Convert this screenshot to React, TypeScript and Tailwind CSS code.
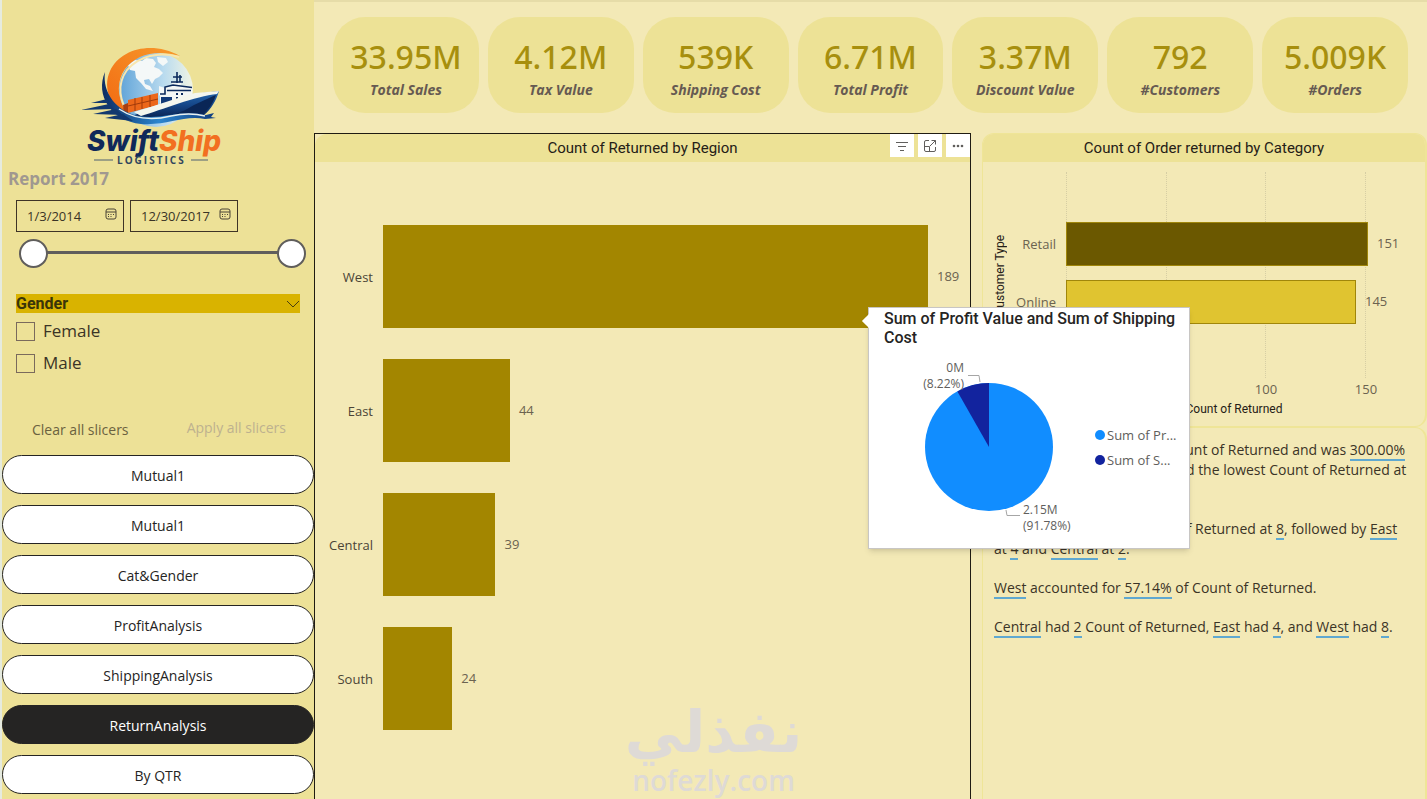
import React, { useState } from 'react'
import clsx from 'clsx'

interface Kpi {
  value: string
  label: string
}

interface Bar {
  name: string
  count: number
  color?: string
}

const kpis: Kpi[] = [
  { value: '33.95M', label: 'Total Sales' },
  { value: '4.12M', label: 'Tax Value' },
  { value: '539K', label: 'Shipping Cost' },
  { value: '6.71M', label: 'Total Profit' },
  { value: '3.37M', label: 'Discount Value' },
  { value: '792', label: '#Customers' },
  { value: '5.009K', label: '#Orders' },
]

const regions: Bar[] = [
  { name: 'West', count: 189 },
  { name: 'East', count: 44 },
  { name: 'Central', count: 39 },
  { name: 'South', count: 24 },
]

const customerTypes: Bar[] = [
  { name: 'Retail', count: 151, color: '#6b5800' },
  { name: 'Online', count: 145, color: '#e0c430' },
]

const pages = ['Mutual1', 'Mutual1', 'Cat&Gender', 'ProfitAnalysis', 'ShippingAnalysis', 'ReturnAnalysis', 'By QTR']

function Logo() {
  return (
    <svg viewBox="0 0 150 124" className="w-[150px] h-[124px]" role="img" aria-label="SwiftShip Logistics">
      <defs>
        <linearGradient id="globe" x1="0" y1="0" x2="1" y2="0">
          <stop offset="0" stopColor="#5fa3d8" />
          <stop offset="0.6" stopColor="#b9dbef" />
          <stop offset="1" stopColor="#f1f4e4" />
        </linearGradient>
        <linearGradient id="ring" x1="0" y1="1" x2="1" y2="0">
          <stop offset="0" stopColor="#f26a12" />
          <stop offset="1" stopColor="#f79a2c" />
        </linearGradient>
        <linearGradient id="hull" x1="0" y1="0" x2="0" y2="1">
          <stop offset="0" stopColor="#2568ae" />
          <stop offset="0.5" stopColor="#154789" />
          <stop offset="1" stopColor="#0a2352" />
        </linearGradient>
        <linearGradient id="wave" x1="0" y1="0" x2="1" y2="0">
          <stop offset="0" stopColor="#0c2c62" />
          <stop offset="0.5" stopColor="#2c86cf" />
          <stop offset="1" stopColor="#0e3b7c" />
        </linearGradient>
      </defs>
      <circle cx="81" cy="47" r="37" fill="url(#globe)" />
      {/* continents */}
      <path d="M53 22 L60 17 L67 18 L71 15 L78 16 L81 20 L79 24 L84 26 L88 30 L84 34 L80 36 L77 41 L74 36 L69 37 L70 41 L75 43 L78 48 L71 46 L66 40 L61 35 L60 28 L55 27 Z" fill="#f4f8f8" />
      <path d="M82 14 L91 15 L93 19 L88 23 L83 19 Z M84 43 L93 46 L95 52 L89 56 L84 52 Z" fill="#f4f8f8" />
      {/* orange crescent */}
      <path d="M105 13 C78 -2 46 5 35 28 C27 46 36 66 53 71 C43 58 40 40 50 26 C61 11 82 6 105 13 Z" fill="url(#ring)" />
      <path d="M104 14 C84 8 64 13 52 27 C41 42 45 59 54 71" fill="none" stroke="#f8e6ae" strokeWidth="2" />
      {/* containers */}
      <path d="M53 57 L83 50 L83 62 L53 70 Z" fill="#ec671a" />
      <path d="M60 55 V68 M67 54 V66 M75 52 V64 M53 63 L83 56" stroke="#a13b0b" strokeWidth="1" fill="none" />
      <path d="M48 62 L53 60 V71 L49 72 Z" fill="#a83f10" />
      {/* bridge */}
      <path d="M85 60 V51 L89 50 V44 L97 43 V39 H106 V43 L117 44 V54 L111 59 L90 63 Z" fill="#f3f6f5" />
      <path d="M85 51 H90 V44 L98 42 L117 44.500 M96 39 H108 M102 40 V29 M98 34 H107 M105 39 V32 M92 47.500 H116" stroke="#0b2a5d" strokeWidth="1.600" fill="none" />
      <path d="M101 51 h2 M106 51 h2 M101 55 h2 M106 55 h2" stroke="#0b2a5d" strokeWidth="2" />
      <path d="M86 54 H97 V61 L86 63 Z" fill="#123a78" />
      {/* hull */}
      <path d="M56 73 C80 66 102 57 119 51 L144 48 C141 58 136 66 129 72 C106 70 80 79 56 73 Z" fill="url(#hull)" />
      <path d="M59 69 C83 62 104 54 120 50 L144 48 L142 51 C121 53 86 67 66 73 Z" fill="#f4f6ee" />
      <path d="M119 62 C128 58 136 54 141 52 C138 60 134 66 128 71 C122 69 110 70 98 72 C106 69 113 66 119 62 Z" fill="#0a2656" />
      {/* bow wave */}
      <path d="M30 29 C27 50 42 69 64 73 C88 77 104 66 131 72 L139 70 L136 74 L141 75 L130 76 C108 72 92 83 66 81 C36 78 20 52 30 29 Z" fill="url(#wave)" />
      <path d="M44 66 C62 78 80 77 96 73 C110 70 122 71 130 73" stroke="#e9f1ef" strokeWidth="1.500" fill="none" />
      {/* speed lines */}
      <path d="M16 60 L32 56 L34 60 Z M6 67 L34 61 L39 66 Z M18 71 L41 66 L48 72 Z M30 75 L48 71 L58 78 Z" fill="#12386f" />
      <text x="12" y="108" fontFamily="Inter, Open Sans, sans-serif" fontSize="28" fontWeight="800" fontStyle="italic" fill="#10295a">
        Swift<tspan fill="#f26f21">Ship</tspan>
      </text>
      <path d="M19 117 H38 M116 117 H133" stroke="#4f6173" strokeWidth="1" />
      <text x="42" y="121" fontFamily="Open Sans, Noto Sans, sans-serif" fontSize="10" fontWeight="700" className="tracking-[2px]" fill="#33475e">
        LOGISTICS
      </text>
    </svg>
  )
}

function CalendarIcon() {
  return (
    <svg viewBox="0 0 12 12" className="w-3 h-3 shrink-0" fill="none" stroke="#4a4436">
      <rect x="1" y="1" width="10" height="10" rx="2" />
      <path d="M1 4 H11" />
      <path d="M3 6.5 H4 M5.5 6.5 H6.5 M8 6.5 H9 M3 8.5 H4 M5.5 8.5 H6.5" />
    </svg>
  )
}

function DateField({ label, initial }: { label: string; initial: string }) {
  const [value, setValue] = useState(initial)
  return (
    <label className="flex items-center w-[108px] h-8 pl-2.5 pr-1.5 border border-[#3f3426]">
      <input
        type="text"
        aria-label={label}
        value={value}
        onChange={e => setValue(e.target.value)}
        className="min-w-0 flex-1 bg-transparent pt-0.5 text-[13px] text-[#3b3426] outline-none"
      />
      <span className="pb-1"><CalendarIcon /></span>
    </label>
  )
}

const thumb =
  'absolute inset-0 w-full h-7 appearance-none bg-transparent pointer-events-none [&::-webkit-slider-thumb]:appearance-none [&::-webkit-slider-thumb]:pointer-events-auto [&::-webkit-slider-thumb]:w-[29px] [&::-webkit-slider-thumb]:h-[29px] [&::-webkit-slider-thumb]:rounded-full [&::-webkit-slider-thumb]:bg-white [&::-webkit-slider-thumb]:border-2 [&::-webkit-slider-thumb]:border-solid [&::-webkit-slider-thumb]:border-[#605e5c]'

function Sidebar() {
  const [active, setActive] = useState(5)

  return (
    <aside className="w-[314px] shrink-0 flex flex-col bg-[#ede197] border-l-2 border-[#e6ebdf]">
      <div className="flex justify-center pt-[43px] pr-4">
        <Logo />
      </div>
      <h1 className="pl-1.5 text-[17px] leading-6 font-bold text-[#a09890]">Report 2017</h1>

      <div className="flex gap-1.5 pl-3.5 mt-[9px]">
        <DateField label="Start date" initial="1/3/2014" />
        <DateField label="End date" initial="12/30/2017" />
      </div>
      <div className="relative h-7 ml-[17px] mr-2 mt-[7px]">
        <div className="absolute inset-x-3 top-3 h-[3px] bg-[#605e5c]" />
        <input type="range" aria-label="Range start" min={0} max={100} defaultValue={0} className={thumb} />
        <input type="range" aria-label="Range end" min={0} max={100} defaultValue={100} className={thumb} />
      </div>

      <div role="group" aria-label="Gender" className="mt-[27px] ml-3.5 mr-[14px]">
        <button type="button" className="flex w-full items-center justify-between bg-[#d9b300] font-[Roboto,sans-serif] text-base leading-[19px] font-bold text-[#3a3509]">
          Gender
          <svg viewBox="0 0 14 8" className="w-3.5 h-2" fill="none" stroke="#4a4010">
            <path d="M1 1 L7 7 L13 1" />
          </svg>
        </button>
        {['Female', 'Male'].map(name => (
          <label key={name} className="flex h-8 items-center gap-2 pt-1 text-[17px] text-[#3b3426]">
            <input type="checkbox" className="appearance-none w-[19px] h-[19px] border border-[#7a6a5c] checked:bg-[#605e5c]" />
            {name}
          </label>
        ))}
      </div>

      <div className="flex justify-between mt-10 pl-[30px] pr-7 h-6 text-sm">
        <button type="button" className="pt-0.5 text-[#6b6140]">Clear all slicers</button>
        <button type="button" disabled className="pb-0.5 text-[#bdb18f]">Apply all slicers</button>
      </div>

      <nav className="flex flex-col gap-[11px] mt-3.5 pb-1">
        {pages.map((page, idx) => (
          <button
            key={idx}
            type="button"
            onClick={() => setActive(idx)}
            className={clsx(
              'h-[39px] pt-0.5 rounded-[20px] border border-[#252423] text-sm',
              idx === active ? 'bg-[#252423] text-white' : 'bg-white text-[#252423]'
            )}
          >
            {page}
          </button>
        ))}
      </nav>
    </aside>
  )
}

function KpiCard({ value, label }: Kpi) {
  return (
    <div className="flex-1 h-24 rounded-[32px] bg-[#ede296] flex flex-col items-center pt-5 whitespace-nowrap">
      <span className="font-['Noto_Sans','Open_Sans',sans-serif] text-[32px] leading-10 font-medium text-[#a78f0e]">{value}</span>
      <span className="text-sm leading-[26px] font-bold italic text-[#665a52]">{label}</span>
    </div>
  )
}

function ChartToolbar() {
  const button = 'w-6 h-[23px] bg-white flex items-center justify-center'
  return (
    <div className="flex gap-1 justify-end">
      <button type="button" aria-label="Filters" className={button}>
        <svg viewBox="0 0 12 10" className="w-3 h-2.5" stroke="#605e5c" fill="none">
          <path d="M0 1.5 H12 M2 5.5 H10 M4 9.5 H8" />
        </svg>
      </button>
      <button type="button" aria-label="Focus mode" className={button}>
        <svg viewBox="0 0 14 14" className="w-3.5 h-3.5" stroke="#605e5c" fill="none">
          <path d="M6 1.5 H3 Q1.500 1.500 1.500 3 V11 Q1.500 12.500 3 12.500 H11 Q12.500 12.500 12.500 11 V8 M8.500 1.500 H12.500 V5.500 M12.500 1.500 L7 7 M1.500 7.500 H6.500 V12.500" />
        </svg>
      </button>
      <button type="button" aria-label="More options" className={button}>
        <svg viewBox="0 0 12 4" className="w-3 h-1" fill="#605e5c">
          <circle cx="2" cy="2" r="1.300" />
          <circle cx="6" cy="2" r="1.300" />
          <circle cx="10" cy="2" r="1.300" />
        </svg>
      </button>
    </div>
  )
}

function ProfitTooltip() {
  return (
    <div role="tooltip" className="absolute z-20 top-[173px] -right-[220px] w-[322px] bg-white border border-[#c8c6c4] shadow-md">
      <div className="absolute -left-[5px] top-2 w-2.5 h-2.5 rotate-45 bg-white" />
      <h3 className="pl-[15px] pt-px font-[Roboto,sans-serif] text-base leading-[19px] font-medium text-[#252423] whitespace-nowrap">
        Sum of Profit Value and Sum of Shipping
        <br />
        Cost
      </h3>
      <div className="flex items-center">
        <svg viewBox="0 0 220 201" className="w-[220px] h-[201px] shrink-0" fontSize="12" fill="#605e5c">
          <circle cx="120" cy="100" r="64" fill="#118dff" />
          <path d="M120 100 L88.400 44.400 A64 64 0 0 1 120 36 Z" fill="#12239e" />
          <path d="M99 28.5 H110 L111 35 M137 163 L138 168.5 H151" fill="none" stroke="#a6a6a6" />
          <text x="95" y="25" textAnchor="end">0M</text>
          <text x="95" y="41" textAnchor="end">(8.22%)</text>
          <text x="154" y="167">2.15M</text>
          <text x="154" y="183">(91.78%)</text>
        </svg>
        <ul className="ml-1.5 text-[13px] leading-[25px] text-[#605e5c] whitespace-nowrap">
          <li className="flex items-center gap-0.5">
            <span className="w-2.5 h-2.5 rounded-full bg-[#118dff]" />
            Sum of Pr...
          </li>
          <li className="flex items-center gap-0.5">
            <span className="w-2.5 h-2.5 rounded-full bg-[#12239e]" />
            Sum of S...
          </li>
        </ul>
      </div>
    </div>
  )
}

function RegionChart() {
  const max = Math.max(...regions.map(r => r.count))
  return (
    <section className="relative flex-1 border border-b-0 border-[#1f1b12]">
      <header className="grid grid-cols-[1fr_auto_1fr] h-7 rounded-tl-xl bg-[#ede296]">
        <span />
        <h2 className="font-[Roboto,sans-serif] text-[15px] leading-7 text-[#252016]">Count of Returned by Region</h2>
        <ChartToolbar />
      </header>
      <div className="flex flex-col gap-[31px] pt-[63px]">
        {regions.map(region => (
          <div key={region.name} className="flex items-center h-[103px] pr-[42px]">
            <span className="w-[58px] mr-2.5 pt-0.5 text-right text-[13px] text-[#4a4436]">{region.name}</span>
            <div className="flex flex-1 h-full items-center">
              <div className="h-full shrink-0 bg-[#a38600]" style={{ width: `${(region.count / max) * 100}%` }} />
              <span className="ml-[9px] text-[13px] text-[#6b6350]">{region.count}</span>
            </div>
          </div>
        ))}
      </div>
      <ProfitTooltip />
    </section>
  )
}

function CategoryChart() {
  const axisMax = 150
  return (
    <section className="h-[294px] rounded-xl border border-r-2 border-[#efe597] overflow-hidden">
      <header className="h-7 bg-[#ede296] text-center">
        <h2 className="font-[Roboto,sans-serif] text-[15px] leading-7 text-[#252016]">Count of Order returned by Category</h2>
      </header>
      <div className="flex pt-2.5">
        <div className="flex w-[31px] h-[206px] items-center justify-end">
          <span className="[writing-mode:vertical-rl] rotate-180 mr-1.5 font-[Roboto,sans-serif] text-xs text-[#252016]">Customer Type</span>
        </div>
        <div className="flex flex-col gap-3.5 w-[42px] pt-[50px] mr-2.5 items-end text-[13px] text-[#6b6350]">
          {customerTypes.map(type => (
            <span key={type.name} className="h-11 leading-[44px]">{type.name}</span>
          ))}
        </div>
        <div className="w-[300px]">
          <div className="relative h-[206px] pt-[50px]">
            <div className="absolute inset-0 flex">
              {[50, 100, 150].map(tick => (
                <span key={tick} className="flex-1 border-l border-dotted border-[#d6cea4] last:border-r" />
              ))}
            </div>
            <div className="relative flex flex-col gap-3.5">
              {customerTypes.map(type => (
                <div key={type.name} className="flex h-11 items-center">
                  <div
                    className="h-full shrink-0 border border-[#a0860a]"
                    style={{ width: `${(type.count / axisMax) * 100}%`, backgroundColor: type.color }}
                  />
                  <span className="ml-[9px] text-[13px] text-[#6b6350]">{type.count}</span>
                </div>
              ))}
            </div>
          </div>
          <div className="flex justify-between -mx-3 h-6 items-center text-[13px] text-[#6b6350]">
            {[0, 50, 100, 150].map(tick => (
              <span key={tick} className="w-6 text-center">{tick}</span>
            ))}
          </div>
          <div className="pl-9 text-center font-[Roboto,sans-serif] text-xs leading-[14px] text-[#252016]">Count of Returned</div>
        </div>
      </div>
    </section>
  )
}

// Highlighted value inside the narrative
function Mark({ children }: { children: React.ReactNode }) {
  return <span className="border-b-2 border-[#5fa8d0]">{children}</span>
}

function Narrative() {
  return (
    <section className="flex-1 rounded-t-xl border border-b-0 border-r-2 border-[#efe597] pl-[11px] pt-3 text-sm leading-5 text-[#3b3426] whitespace-nowrap space-y-[19px]">
      <p>
        At <Mark>8</Mark>, <Mark>West</Mark> had the highest Count of Returned and was <Mark>300.00%</Mark>
        <br />
        higher than <Mark>Central</Mark>, which had the lowest Count of Returned at
        <br />
        <Mark>2</Mark>.
      </p>
      <p>
        <Mark>West</Mark> had the highest Count of Returned at <Mark>8</Mark>, followed by <Mark>East</Mark>
        <br />
        at <Mark>4</Mark> and <Mark>Central</Mark> at <Mark>2</Mark>.
      </p>
      <p>
        <Mark>West</Mark> accounted for <Mark>57.14%</Mark> of Count of Returned.
      </p>
      <p>
        <Mark>Central</Mark> had <Mark>2</Mark> Count of Returned, <Mark>East</Mark> had <Mark>4</Mark>, and <Mark>West</Mark> had <Mark>8</Mark>.
      </p>
    </section>
  )
}

export default function App() {
  return (
    <div className="relative flex min-h-screen overflow-hidden bg-[#f3e9b6] font-['Open_Sans','Noto_Sans',sans-serif]">
      <Sidebar />
      <main className="flex-1 min-w-0 flex flex-col border-t-2 border-[#e6dca8]">
        <div className="flex gap-[9px] px-[19px] pt-[15px] pb-5">
          {kpis.map(kpi => (
            <KpiCard key={kpi.label} {...kpi} />
          ))}
        </div>
        <div className="flex flex-1 gap-[11px]">
          <RegionChart />
          <div className="w-[445px] shrink-0 flex flex-col">
            <CategoryChart />
            <Narrative />
          </div>
        </div>
      </main>

      {/* Watermark */}
      <div className="absolute bottom-0 left-1/2 -translate-x-1/2 text-center text-[#dedad6] pointer-events-none">
        <div lang="ar" dir="rtl" className="font-['DejaVu_Sans',sans-serif] text-[58px] leading-[58px] font-bold">نفذلي</div>
        <div className="text-[28px] leading-[38px] font-semibold">nofezly.com</div>
      </div>
    </div>
  )
}
